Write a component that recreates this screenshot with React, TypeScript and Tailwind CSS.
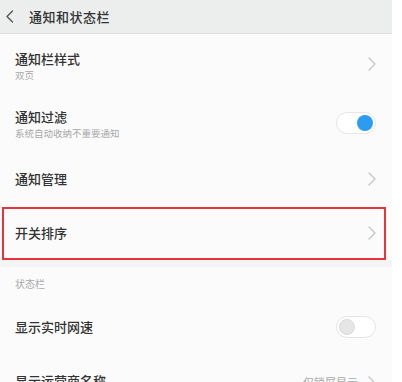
const font = { fontFamily: '"Noto Sans CJK SC", "Noto Sans", sans-serif' };

function Chevron() {
  return (
    <svg width="8" height="14" viewBox="0 0 8 14" fill="none" className="shrink-0">
      <path d="M1 1l6 6-6 6" stroke="#c4c4c4" strokeWidth="1.3" strokeLinecap="round" strokeLinejoin="round" />
    </svg>
  );
}

function BackArrow() {
  return (
    <svg width="9" height="13" viewBox="0 0 9 13" fill="none" className="shrink-0 ml-[5px]">
      <path d="M7.5 1L2 6.5 7.5 12" stroke="#555" strokeWidth="1.4" strokeLinecap="round" strokeLinejoin="round" />
    </svg>
  );
}

function Toggle({ on }: { on: boolean }) {
  return (
    <div className="w-[40px] h-[22px] rounded-full border border-[#e6e6e6] bg-white flex items-center px-[2px] shrink-0">
      {on ? (
        <div className="ml-auto w-[16px] h-[16px] rounded-full bg-[#2b9cf2]" />
      ) : (
        <div className="w-[16px] h-[16px] rounded-full bg-[#e6e6e6] border border-[#dadada]" />
      )}
    </div>
  );
}

function Divider() {
  return <div className="ml-[14px] h-px bg-[#ececec]" />;
}

export default function App() {
  return (
    <div className="w-[402px] h-[382px] overflow-hidden bg-white" style={font}>
      <div className="w-[392px] h-full bg-[#fbfbfb] flex flex-col">
        {/* Header */}
        <header className="h-[34px] shrink-0 bg-[#eceeee] border-b border-[#dcdedd] flex items-center">
          <BackArrow />
          <span className="ml-[15px] text-[13px] font-medium text-[#333] tracking-[0.5px]">通知和状态栏</span>
        </header>

        {/* 通知栏样式 */}
        <div className="h-[59px] shrink-0 flex items-center pl-[15px] pr-[16px]">
          <div className="flex-1 flex flex-col pt-[4px]">
            <span className="text-[13px] leading-[18px] font-medium text-[#333]">通知栏样式</span>
            <span className="text-[9.5px] leading-[14px] text-[#a8a8a8]">双页</span>
          </div>
          <Chevron />
        </div>
        <Divider />

        {/* 通知过滤 */}
        <div className="h-[59px] shrink-0 flex items-center pl-[15px] pr-[16px]">
          <div className="flex-1 flex flex-col pt-[2px]">
            <span className="text-[13px] leading-[18px] font-medium text-[#333]">通知过滤</span>
            <span className="text-[9.5px] leading-[14px] text-[#a8a8a8]">系统自动收纳不重要通知</span>
          </div>
          <Toggle on />
        </div>
        <Divider />

        {/* 通知管理 */}
        <div className="h-[53px] shrink-0 flex items-center pl-[15px] pr-[16px]">
          <span className="flex-1 text-[13px] font-medium text-[#333]">通知管理</span>
          <Chevron />
        </div>
        <Divider />

        {/* 开关排序 */}
        <div className="relative h-[55px] shrink-0 flex items-center pl-[15px] pr-[16px]">
          <span className="flex-1 text-[13px] font-medium text-[#333]">开关排序</span>
          <Chevron />
          <div className="absolute left-[2px] top-[2px] w-[384px] h-[53px] border-2 border-[#e8333a] pointer-events-none" />
        </div>

        <div className="h-[7px] shrink-0 bg-[#f4f4f4]" />

        {/* 状态栏 section */}
        <div className="h-[33px] shrink-0 flex items-center pl-[15px]">
          <span className="text-[10px] text-[#aaaaaa]">状态栏</span>
        </div>
        <Divider />

        {/* 显示实时网速 */}
        <div className="h-[54px] shrink-0 flex items-center pl-[15px] pr-[16px]">
          <span className="flex-1 text-[13px] font-medium text-[#333]">显示实时网速</span>
          <Toggle on={false} />
        </div>
        <Divider />

        {/* 显示运营商名称 */}
        <div className="h-[36px] shrink-0 flex items-end pl-[15px] pr-[16px]">
          <span className="flex-1 text-[13px] leading-[18px] font-medium text-[#333]">显示运营商名称</span>
          <span className="text-[11px] leading-[16px] text-[#aaaaaa] mr-[10px]">仅锁屏显示</span>
          <Chevron />
        </div>
      </div>
    </div>
  );
}
